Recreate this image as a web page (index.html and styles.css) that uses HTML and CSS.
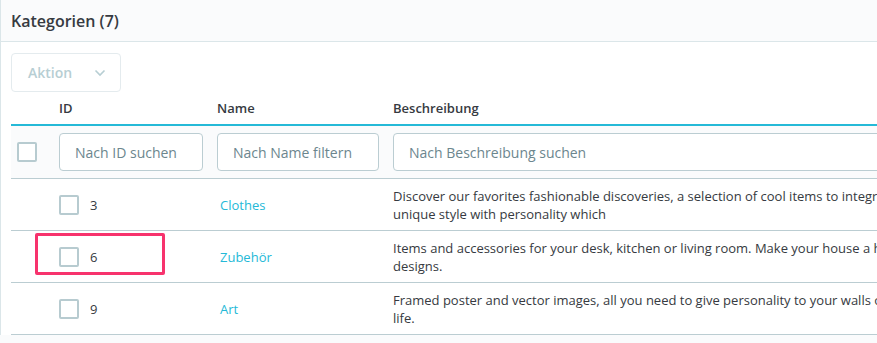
FILE: index.html
```html
<!DOCTYPE html>
<html lang="de">
<head>
<meta charset="utf-8">
<link rel="stylesheet" href="styles.css">
</head>
<body>
<div class="card">
  <div class="card-header">Kategorien (7)</div>
  <div class="card-body">
    <button class="action-btn" type="button">Aktion
      <svg class="chev" width="12" height="8" viewBox="0 0 12 8"><path d="M1.5 1.5 L6 6 L10.5 1.5" fill="none" stroke="#b7ced3" stroke-width="1.6"/></svg>
    </button>
    <table class="grid">
      <colgroup>
        <col class="c-sel"><col class="c-id"><col class="c-name"><col class="c-desc">
      </colgroup>
      <thead>
        <tr class="head">
          <th></th><th>ID</th><th>Name</th><th>Beschreibung</th>
        </tr>
        <tr class="filters">
          <td class="sel"><span class="cb"></span></td>
          <td><input class="fi" placeholder="Nach ID suchen"></td>
          <td><input class="fi" placeholder="Nach Name filtern"></td>
          <td><input class="fi wide" placeholder="Nach Beschreibung suchen"></td>
        </tr>
      </thead>
      <tbody>
        <tr>
          <td></td>
          <td><div class="idcell"><span class="cb"></span><span>3</span></div></td>
          <td><a class="link" href="#">Clothes</a></td>
          <td class="desc">Discover our favorites fashionable discoveries, a selection of cool items to integrate in your wardrobe. Compose a<br>unique style with personality which</td>
        </tr>
        <tr>
          <td></td>
          <td class="marked"><div class="idcell"><span class="cb"></span><span>6</span></div><span class="mark"></span></td>
          <td><a class="link" href="#">Zubehör</a></td>
          <td class="desc">Items and accessories for your desk, kitchen or living room. Make your house a home with our eye-catching<br>designs.</td>
        </tr>
        <tr>
          <td></td>
          <td><div class="idcell"><span class="cb"></span><span>9</span></div></td>
          <td><a class="link" href="#">Art</a></td>
          <td class="desc">Framed poster and vector images, all you need to give personality to your walls or bring your creative spaces to<br>life.</td>
        </tr>
      </tbody>
    </table>
  </div>
</div>
</body>
</html>
```
FILE: styles.css
```css
html, body {
  margin: 0;
  padding: 0;
  background: #fafbfc;
  overflow: hidden;
}
body {
  font-family: "Open Sans", "Noto Sans", sans-serif;
  color: #363a41;
  width: 877px;
  height: 343px;
}
.card {
  border-left: 1px solid #dbe6e9;
  background: #fff;
  width: 1100px;
}
.card-header {
  height: 42px;
  box-sizing: border-box;
  background: #fafbfc;
  border-bottom: 1px solid #dbe6e9;
  font-size: 16px;
  font-weight: 600;
  line-height: 42px;
  padding-left: 10px;
}
.card-body {
  padding: 11px 0 0 10px;
}
.action-btn {
  display: flex;
  align-items: center;
  width: 110px;
  height: 39px;
  box-sizing: border-box;
  border: 1px solid #e4ebee;
  border-radius: 4px;
  background: #fff;
  font-family: inherit;
  font-size: 14px;
  font-weight: 600;
  color: #b7ced3;
  padding: 0 0 0 16px;
  margin: 0;
}
.chev { margin-left: 22px; }
.grid {
  border-collapse: collapse;
  table-layout: fixed;
  width: 1000px;
  font-size: 13px;
}
.c-sel { width: 41px; }
.c-id { width: 158px; }
.c-name { width: 176px; }
.c-desc { width: 625px; }
.head th {
  text-align: left;
  font-size: 13px;
  font-weight: 600;
  height: 32px;
  padding: 0 7px;
  vertical-align: middle;
  border-bottom: 2px solid #25b9d7;
  background: #fff;
}
.filters td {
  background: #fafbfc;
  height: 52px;
  padding: 0 7px;
  border-bottom: 1px solid #bbcdd2;
  vertical-align: middle;
}
.filters td.sel { padding: 0 0 0 6px; }
.cb {
  display: inline-block;
  width: 20px;
  height: 20px;
  box-sizing: border-box;
  border: 2px solid #b7cbd0;
  border-radius: 2px;
  background: #fff;
  vertical-align: middle;
}
.fi {
  display: block;
  width: 100%;
  height: 38px;
  box-sizing: border-box;
  border: 1px solid #bbcdd2;
  border-radius: 4px;
  background: #fff;
  font-family: inherit;
  font-size: 14px;
  padding: 0 15px;
  color: #363a41;
  margin: 0;
}
.fi::placeholder { color: #6c868e; opacity: 1; }
.fi.wide { width: 560px; }
tbody td {
  height: 51px;
  padding: 0 7px;
  border-bottom: 1px solid #bbcdd2;
  vertical-align: middle;
  background: #fff;
  font-size: 13px;
}
.idcell {
  display: flex;
  align-items: center;
  gap: 11px;
}
.marked { position: relative; }
.mark {
  position: absolute;
  left: -17px;
  top: 2px;
  width: 130px;
  height: 42px;
  box-sizing: border-box;
  border: 3px solid #f7336d;
  border-radius: 2px;
}
.link {
  color: #25b9d7;
  text-decoration: none;
  font-size: 13px;
  padding-left: 3px;
}
.desc {
  line-height: 18px;
  font-size: 13px;
  white-space: nowrap;
}
```
